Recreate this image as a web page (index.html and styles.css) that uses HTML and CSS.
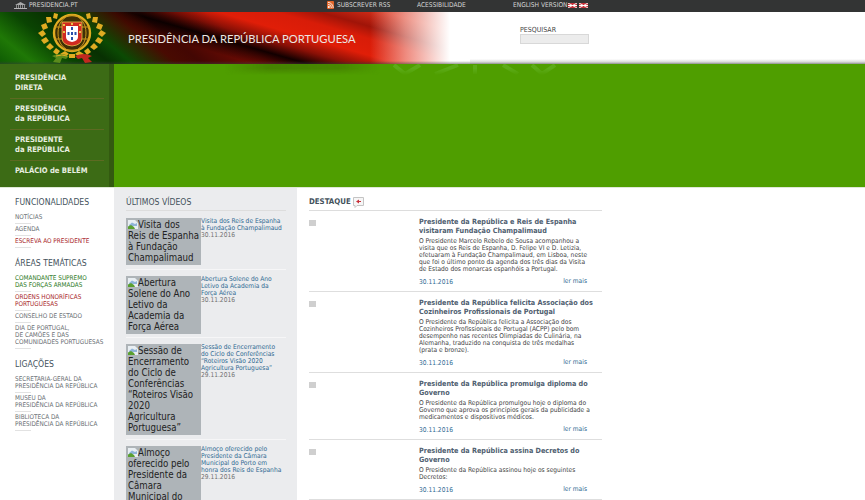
FILE: index.html
```html
<!DOCTYPE html>
<html lang="pt">

<head>
    <meta charset="UTF-8">
    <title>Presidência da República Portuguesa</title>
    <link rel="stylesheet" href="styles.css">
</head>

<body>
    <div class="topbar">
        <a class="top-home">
            <svg class="palace" width="13" height="7" viewBox="0 0 13 7">
                <path d="M1 3 6.5 0 12 3Z" fill="#a9a9a9" />
                <path d="M2 3h1v3H2zM4 3h1v3H4zM6 3h1v3H6zM8 3h1v3H8zM10 3h1v3h-1z" fill="#8d8d8d" />
                <path d="M0 6h13v1H0z" fill="#b5b5b5" />
            </svg>
            PRESIDENCIA.PT
        </a>
        <a class="top-rss">
            <svg width="7" height="8" viewBox="0 0 7 8">
                <rect width="7" height="8" rx="1" fill="#e0662a" />
                <circle cx="1.8" cy="6" r="1" fill="#fff" />
                <path d="M1 3.4A3.4 3.4 0 0 1 4.4 7M1 1.4A5.4 5.4 0 0 1 6.2 7" fill="none" stroke="#fff" stroke-width=".8" />
            </svg>
            SUBSCREVER RSS
        </a>
        <a class="top-access">ACESSIBILIDADE</a>
        <a class="top-english">
            ENGLISH VERSION
            <svg width="20" height="5" viewBox="0 0 20 5">
                <rect width="9" height="5" fill="#c8303a" />
                <rect x="11" width="9" height="5" fill="#c8303a" />
                <path d="M0 0 9 5M9 0 0 5M11 0 20 5M20 0 11 5" stroke="#eee" stroke-width="1" />
                <path d="M0 2h9v1H0zM11 2h9v1h-9z" fill="#fff" />
            </svg>
        </a>
    </div>

    <header class="banner">
        <div class="banner-art">
            <svg class="crest" width="68" height="52" viewBox="0 0 68 52">
                <!-- laurel -->
                <g fill="#e0ac22">
                    <path d="M0 21 5 18 8 22 4 25Z" />
                    <path d="M3 13 8 11 10 16 5 18Z" />
                    <path d="M8 5 13 5 14 10 9 11Z" />
                    <path d="M16 1 20 2 19 7 15 6Z" />
                    <path d="M3 28 8 25 11 29 6 32Z" />
                    <path d="M8 35 12 31 16 35 12 38Z" />
                    <path d="M15 40 18 36 22 39 19 43Z" />
                    <path d="M68 21 63 18 60 22 64 25Z" />
                    <path d="M65 13 60 11 58 16 63 18Z" />
                    <path d="M60 5 55 5 54 10 59 11Z" />
                    <path d="M52 1 48 2 49 7 53 6Z" />
                    <path d="M65 28 60 25 57 29 62 32Z" />
                    <path d="M60 35 56 31 52 35 56 38Z" />
                    <path d="M53 40 50 36 46 39 49 43Z" />
                    <path d="M22 42 27 39 31 42 26 45Z" />
                    <path d="M46 42 41 39 37 42 42 45Z" />
                </g>
                <!-- armillary ring -->
                <circle cx="34" cy="21" r="18" fill="#3f3006" stroke="#e0ac22" stroke-width="2.4" />
                <ellipse cx="34" cy="21" rx="14" ry="18" fill="none" stroke="#c9971c" stroke-width="1" />
                <path d="M16 15H52M16 27H52" stroke="#c9971c" stroke-width="1" />
                <!-- shield -->
                <path d="M24 10H44V26Q44 33 34 34 24 33 24 26Z" fill="#d02a20" stroke="#e8c34a" stroke-width=".8" />
                <path d="M28 14H40V25Q40 29 34 30 28 29 28 25Z" fill="#fff" />
                <path d="M33 15h2v3h-2zM29.5 20h2v3h-2zM33 20h2v3h-2zM36.5 20h2v3h-2zM33 25h2v3h-2z" fill="#2a4ea8" />
                <path d="M25 12h2v2h-2zM41 12h2v2h-2zM25 19h2v2h-2zM41 19h2v2h-2zM33 11h2v2h-2z" fill="#e8c34a" />
                <!-- ribbon -->
                <path d="M14 44Q22 40 31 44L28 47 24 46 22 51 15 50 18 46Z" fill="#5b8a1c" />
                <path d="M18 44Q24 42 29 44" stroke="#e0ac22" fill="none" />
                <path d="M54 44Q46 40 37 44L40 47 44 46 47 51 54 50 50 46Z" fill="#c2281f" />
                <path d="M31 42h6v4h-6z" fill="#e0ac22" />
            </svg>
            <h1 class="site-title">PRESIDÊNCIA DA REPÚBLICA PORTUGUESA</h1>
        </div>
        <form class="search">
            <label for="q">PESQUISAR</label>
            <input id="q" type="text">
        </form>
    </header>

    <section class="hero">
        <nav class="hero-nav">
            <a>PRESIDÊNCIA<br>DIRETA</a>
            <a>PRESIDÊNCIA<br>da REPÚBLICA</a>
            <a>PRESIDENTE<br>da REPÚBLICA</a>
            <a>PALÁCIO de BELÉM</a>
        </nav>
        <div class="hero-main">
            <svg class="hero-streak" width="350" height="11" viewBox="0 0 350 11">
                <defs>
                    <linearGradient id="olive">
                        <stop offset="0" stop-color="#3f7000" stop-opacity="0" />
                        <stop offset=".3" stop-color="#3f7000" stop-opacity=".6" />
                        <stop offset=".75" stop-color="#3f7000" stop-opacity=".5" />
                        <stop offset="1" stop-color="#3f7000" stop-opacity="0" />
                    </linearGradient>
                </defs>
                <rect x="5" width="155" height="11" fill="url(#olive)" />
                <path d="M174 1 185 10 200 1M215 10 238 1M255 1V10M283 1 298 10M312 1 322 10 335 1" fill="none" stroke="#5cab18" stroke-width="4" />
            </svg>
        </div>
    </section>

    <div class="content">
        <aside class="side">
            <h3>FUNCIONALIDADES</h3>
            <ul>
                <li>NOTÍCIAS</li>
                <li>AGENDA</li>
                <li class="red">ESCREVA AO PRESIDENTE</li>
            </ul>
            <h3>ÁREAS TEMÁTICAS</h3>
            <ul>
                <li class="green">COMANDANTE SUPREMO<br>DAS FORÇAS ARMADAS</li>
                <li class="red">ORDENS HONORÍFICAS<br>PORTUGUESAS</li>
                <li>CONSELHO DE ESTADO</li>
                <li>DIA DE PORTUGAL,<br>DE CAMÕES E DAS<br>COMUNIDADES PORTUGUESAS</li>
            </ul>
            <h3>LIGAÇÕES</h3>
            <ul>
                <li>SECRETARIA-GERAL DA<br>PRESIDÊNCIA DA REPÚBLICA</li>
                <li>MUSEU DA<br>PRESIDÊNCIA DA REPÚBLICA</li>
                <li>BIBLIOTECA DA<br>PRESIDÊNCIA DA REPÚBLICA</li>
            </ul>
        </aside>

        <section class="videos">
            <h2>ÚLTIMOS VÍDEOS</h2>
            <article class="video">
                <div class="thumb"><svg class="broken" width="10" height="9" viewBox="0 0 10 9"><use href="#broken-img" /></svg>Visita dos Reis de Espanha à Fundação Champalimaud</div>
                <div class="video-text">
                    <a>Visita dos Reis de Espanha à Fundação Champalimaud</a>
                    <span>30.11.2016</span>
                </div>
            </article>
            <article class="video">
                <div class="thumb"><svg class="broken" width="10" height="9" viewBox="0 0 10 9"><use href="#broken-img" /></svg>Abertura Solene do Ano Letivo da Academia da Força Aérea</div>
                <div class="video-text">
                    <a>Abertura Solene do Ano Letivo da Academia da Força Aérea</a>
                    <span>30.11.2016</span>
                </div>
            </article>
            <article class="video">
                <div class="thumb"><svg class="broken" width="10" height="9" viewBox="0 0 10 9"><use href="#broken-img" /></svg>Sessão de Encerramento do Ciclo de Conferências “Roteiros Visão 2020 Agricultura Portuguesa”</div>
                <div class="video-text">
                    <a>Sessão de Encerramento do Ciclo de Conferências “Roteiros Visão 2020 Agricultura Portuguesa”</a>
                    <span>29.11.2016</span>
                </div>
            </article>
            <article class="video">
                <div class="thumb"><svg class="broken" width="10" height="9" viewBox="0 0 10 9"><use href="#broken-img" /></svg>Almoço oferecido pelo Presidente da Câmara Municipal do Porto em honra dos Reis de Espanha</div>
                <div class="video-text">
                    <a>Almoço oferecido pelo Presidente da Câmara Municipal do Porto em honra dos Reis de Espanha</a>
                    <span>29.11.2016</span>
                </div>
            </article>
        </section>

        <section class="news">
            <h2>DESTAQUE
                <svg class="speak" width="11" height="11" viewBox="0 0 11 11">
                    <path d="M.5.5h10v8H4L2 10.5v-2H.5Z" fill="#f6f6f6" stroke="#c4c4c4" />
                    <path d="M3 4.5 6 2.5v4ZM6 4h2v1H6z" fill="#c8303a" />
                </svg>
            </h2>
            <article class="item">
                <i class="bullet"></i>
                <div class="item-text">
                    <h4>Presidente da República e Reis de Espanha visitaram Fundação Champalimaud</h4>
                    <p>O Presidente Marcelo Rebelo de Sousa acompanhou a visita que os Reis de Espanha, D. Felipe VI e D. Letizia, efetuaram à Fundação Champalimaud, em Lisboa, neste que foi o último ponto da agenda dos três dias da Visita de Estado dos monarcas espanhóis a Portugal.</p>
                    <div class="item-foot"><span>30.11.2016</span><a>ler mais</a></div>
                </div>
            </article>
            <article class="item">
                <i class="bullet"></i>
                <div class="item-text">
                    <h4>Presidente da República felicita Associação dos Cozinheiros Profissionais de Portugal</h4>
                    <p>O Presidente da República felicita a Associação dos Cozinheiros Profissionais de Portugal (ACPP) pelo bom desempenho nas recentes Olimpíadas de Culinária, na Alemanha, traduzido na conquista de três medalhas (prata e bronze).</p>
                    <div class="item-foot"><span>30.11.2016</span><a>ler mais</a></div>
                </div>
            </article>
            <article class="item">
                <i class="bullet"></i>
                <div class="item-text">
                    <h4>Presidente da República promulga diploma do Governo</h4>
                    <p>O Presidente da República promulgou hoje o diploma do Governo que aprova os princípios gerais da publicidade a medicamentos e dispositivos médicos.</p>
                    <div class="item-foot"><span>30.11.2016</span><a>ler mais</a></div>
                </div>
            </article>
            <article class="item">
                <i class="bullet"></i>
                <div class="item-text">
                    <h4>Presidente da República assina Decretos do Governo</h4>
                    <p>O Presidente da República assinou hoje os seguintes Decretos:</p>
                    <div class="item-foot"><span>30.11.2016</span><a>ler mais</a></div>
                </div>
            </article>
        </section>
    </div>

    <svg width="0" height="0" class="defs">
        <symbol id="broken-img" viewBox="0 0 10 9">
            <path d="M0 0h7l3 3v6H0Z" fill="#e8eef2" />
            <path d="M1 5 4 2.5 7 4 9 3v3H1Z" fill="#8fb4d8" />
            <path d="M0 9V6.5L3 5l3 2 1 2Z" fill="#5aa030" />
        </symbol>
    </svg>
</body>

</html>
```

FILE: styles.css
```css
html,
body {
    margin: 0;
    padding: 0;
    height: 500px;
    overflow: hidden;
}

body {
    font-family: "DejaVu Sans Condensed", "DejaVu Sans", Verdana, sans-serif;
    background-color: #ffffff;
    color: #555;
}

/* top bar */
.topbar {
    height: 12px;
    background-color: #333434;
    color: #d6d6d6;
    font-size: 6.6px;
    line-height: 10px;
    display: grid;
    grid-template-columns: 327px 90px 96px auto;
    align-items: start;
}

.topbar a {
    display: flex;
    align-items: center;
    white-space: nowrap;
}

.palace {
    margin: 0 2px 0 14px;
}

.top-rss svg {
    margin-right: 3px;
}

/* banner */
.banner {
    height: 52px;
    display: flex;
    background: linear-gradient(to bottom, #ffffff 0, #ffffff 47px, #d8d8d8 50px, #8f8f8f 52px);
}

.banner-art {
    width: 470px;
    height: 52px;
    display: flex;
    background:
        linear-gradient(to bottom, rgba(120, 120, 120, 0) 49px, rgba(60, 60, 60, .5) 52px),
        linear-gradient(to right, rgba(255, 255, 255, 0) 370px, rgba(255, 225, 220, .55) 405px, #ffffff 450px),
        linear-gradient(39deg, #0e5a03 0, #1f7806 22px, #0a4402 48px, #083002 70px, #0b4a03 84px, rgba(60, 10, 0, .8) 112px, rgba(0, 0, 0, .45) 128px, rgba(0, 0, 0, 0) 170px),
        linear-gradient(16deg, #5a0804 0, #7a0c06 55px, #7a0c04 70px, #120000 85px, #8a1006 97px, #e01e08 110px, #d81c08 126px, #a01408 138px, #d8301a 156px, #c02010 180px);
}

.crest {
    margin-left: 38px;
    flex-shrink: 0;
}

.site-title {
    margin: 0 0 0 22px;
    font-family: Lato, sans-serif;
    font-weight: 400;
    font-size: 11.2px;
    line-height: 53px;
    color: #ece6e2;
    white-space: nowrap;
}

.search {
    margin: 14px 0 0 50px;
    display: flex;
    flex-direction: column;
    align-items: flex-start;
}

.search label {
    font-size: 7px;
    line-height: 8px;
    color: #444;
}

.search input {
    box-sizing: border-box;
    width: 69px;
    height: 10px;
    margin: 0;
    padding: 0;
    border: 1px solid #d8d8d8;
    background-color: #ececec;
}

/* green area */
.hero {
    display: grid;
    grid-template-columns: 114px 1fr;
    height: 123px;
}

.hero-nav {
    background: linear-gradient(to right, #3c6b15 109px, #335a10 109px);
    padding: 4px 10px 0;
    display: flex;
    flex-direction: column;
}

.hero-nav a {
    width: 94px;
    box-sizing: border-box;
    padding: 5.2px 0 6px 5px;
    font-size: 7.6px;
    line-height: 9.4px;
    font-weight: bold;
    color: #e9efe0;
    border-bottom: 1px solid #5d6a22;
}

.hero-nav a:last-child {
    border-bottom: 0;
}

.hero-main {
    background-color: #4f9e00;
}

.hero-streak {
    display: block;
    margin-left: 106px;
    -webkit-mask-image: linear-gradient(to bottom, #000 40%, transparent);
    mask-image: linear-gradient(to bottom, #000 40%, transparent);
}

/* three columns */
.content {
    display: grid;
    grid-template-columns: 114px 183px 305px;
    border-top: 1px solid #dfe8d6;
}

h2,
.side h3 {
    margin: 0;
    font-weight: normal;
    color: #44525c;
}

.side {
    padding: 9px 0 0 15px;
}

.side h3 {
    font-size: 8.6px;
    line-height: 10px;
    white-space: nowrap;
}

.side ul {
    list-style: none;
    margin: 7px 0 10px;
    padding: 0;
}

.side li {
    font-size: 6.4px;
    line-height: 7px;
    color: #6a6f74;
    white-space: nowrap;
    padding-bottom: 3px;
    margin-bottom: 2px;
    position: relative;
}

.side li::after {
    content: "";
    position: absolute;
    left: 0;
    bottom: 0;
    width: 16px;
    height: 1px;
    background-color: #e2e2e2;
}

.side .red {
    color: #a8262a;
}

.side .green {
    color: #2e7a1e;
}

.videos {
    background-color: #ebecee;
    padding: 9px 11px 0 12px;
}

.videos h2,
.news h2 {
    display: flex;
    align-items: center;
    gap: 2px;
    height: 10px;
    font-size: 8.6px;
    line-height: 10px;
    padding-bottom: 3px;
    border-bottom: 1px solid #ddd;
    white-space: nowrap;
}

.videos h2 {
    margin-bottom: 1px;
}

.video {
    display: flex;
    align-items: flex-start;
    padding: 6px 0 3.5px;
    border-bottom: 1px solid #f6f6f7;
}

.thumb {
    box-sizing: border-box;
    flex: 0 0 75px;
    width: 75px;
    padding: 1px 2px 2px;
    background-color: #aeb4b8;
    color: #222;
    font-size: 9.6px;
    line-height: 11px;
}

.broken {
    vertical-align: -1px;
}

.video-text {
    padding-right: 2.5px;
    font-size: 6.6px;
    line-height: 7px;
}

.video-text a {
    display: block;
    color: #2f6a92;
}

.video-text span {
    color: #707070;
}

.news {
    padding: 9px 0 0 12px;
}

.news h2 {
    font-size: 7.8px;
    font-weight: bold;
}

.item {
    display: grid;
    grid-template-columns: 110px 1fr;
    border-bottom: 1px solid #dedede;
}

.bullet {
    display: block;
    width: 7px;
    height: 6px;
    margin-top: 9px;
    background-color: #cfcfcf;
}

.item-text {
    padding: 6px 5px 0 0;
}

.item h4 {
    margin: 0 0 3px;
    font-size: 7.2px;
    line-height: 9px;
    color: #4f6070;
}

.item p {
    margin: 0;
    padding-right: 3px;
    font-size: 6.6px;
    line-height: 7px;
    color: #444;
}

.item-foot {
    display: flex;
    justify-content: space-between;
    padding: 5px 10px 4px 0;
    font-size: 6.6px;
    line-height: 9px;
    color: #2f6a92;
}

.item-foot a {
    margin-top: -1px;
}

.defs {
    position: absolute;
}
```
